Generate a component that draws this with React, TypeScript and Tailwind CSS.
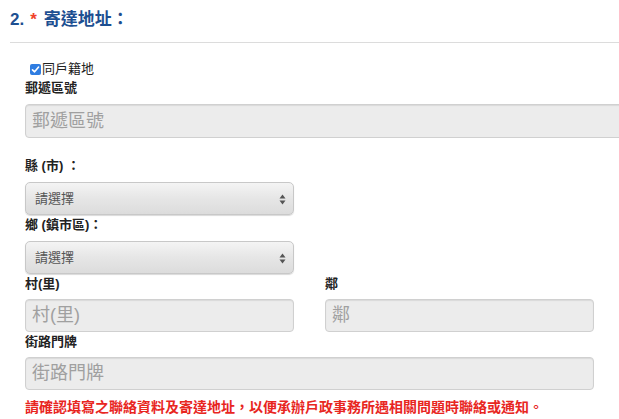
import React from "react";

const font = { fontFamily: '"Liberation Sans", "Noto Sans CJK TC", sans-serif' };

function Select() {
  return (
    <div className="relative flex h-[33px] w-[269px] items-center rounded-[5px] border border-[#c8c8c8] bg-gradient-to-b from-[#f4f4f4] via-[#e6e6e6] to-[#dcdcdc] pl-[9px] text-[13px] text-[#555] shadow-[0_1px_1px_rgba(0,0,0,0.15)]">
      請選擇
      <svg className="absolute right-[7px] top-[11px]" width="7" height="11" viewBox="0 0 7 11">
        <path d="M3.5 0.5 L6.5 4.5 L0.5 4.5 Z" fill="#555" />
        <path d="M3.5 10.5 L6.5 6.5 L0.5 6.5 Z" fill="#555" />
      </svg>
    </div>
  );
}

function Input({ ph, w }: { ph: string; w: string }) {
  return (
    <div
      className={`flex h-[33px] ${w} items-center rounded-[4px] border border-[#d0d0d0] bg-[#ececec] pl-[6px] text-[18px] text-[#a0a0a0] shadow-[inset_0_1px_1px_rgba(0,0,0,0.08)]`}
    >
      {ph}
    </div>
  );
}

function Label({ children }: { children: React.ReactNode }) {
  return <div className="h-[16px] text-[13px] font-bold leading-[16px] text-[#222]">{children}</div>;
}

export default function App() {
  return (
    <div className="relative h-[419px] w-[619px] overflow-hidden bg-white" style={font}>
      <div className="flex items-center pl-[10px] pt-[10px] text-[17px] font-bold leading-[20px] text-[#1d4f91]">
        <span>2.</span>
        <span className="ml-[6px] text-[#f0422a]">*</span>
        <span className="ml-[7px]">寄達地址：</span>
      </div>
      <div className="ml-[10px] mt-[12px] h-px bg-[#dcdcdc]" />
      <div className="pl-[25px]">
        <div className="mt-[19px] flex h-[14px] items-center pl-[5px] text-[13px] leading-[14px] text-[#222]">
          <span className="mr-[1px] flex h-[11px] w-[11px] items-center justify-center rounded-[2px] bg-[#2f7de1]">
            <svg width="9" height="9" viewBox="0 0 9 9">
              <path d="M1.5 4.8 L3.6 6.8 L7.6 2" stroke="white" strokeWidth="1.6" fill="none" strokeLinecap="round" strokeLinejoin="round" />
            </svg>
          </span>
          同戶籍地
        </div>
        <div className="mt-[4px]">
          <Label>郵遞區號</Label>
        </div>
        <div className="mt-[8px]">
          <Input ph="郵遞區號" w="w-[620px] h-[34px]" />
        </div>
        <div className="mt-[20px]">
          <Label>縣 (市) ：</Label>
        </div>
        <div className="mt-[8px]">
          <Select />
        </div>
        <div className="mt-[2px]">
          <Label>鄉 (鎮市區)：</Label>
        </div>
        <div className="mt-[8px]">
          <Select />
        </div>
        <div className="mt-[2px] flex gap-[31px]">
          <div className="flex flex-col">
            <Label>村(里)</Label>
            <div className="mt-[7px]">
              <Input ph="村(里)" w="w-[269px]" />
            </div>
          </div>
          <div className="flex flex-col">
            <Label>鄰</Label>
            <div className="mt-[7px]">
              <Input ph="鄰" w="w-[269px]" />
            </div>
          </div>
        </div>
        <div className="mt-[2px]">
          <Label>街路門牌</Label>
        </div>
        <div className="mt-[7px]">
          <Input ph="街路門牌" w="w-[569px]" />
        </div>
        <div className="mt-[10px] whitespace-nowrap text-[14px] font-bold leading-[14px] text-[#e8261f]">
          請確認填寫之聯絡資料及寄達地址，以便承辦戶政事務所遇相關問題時聯絡或通知。
        </div>
      </div>
    </div>
  );
}
